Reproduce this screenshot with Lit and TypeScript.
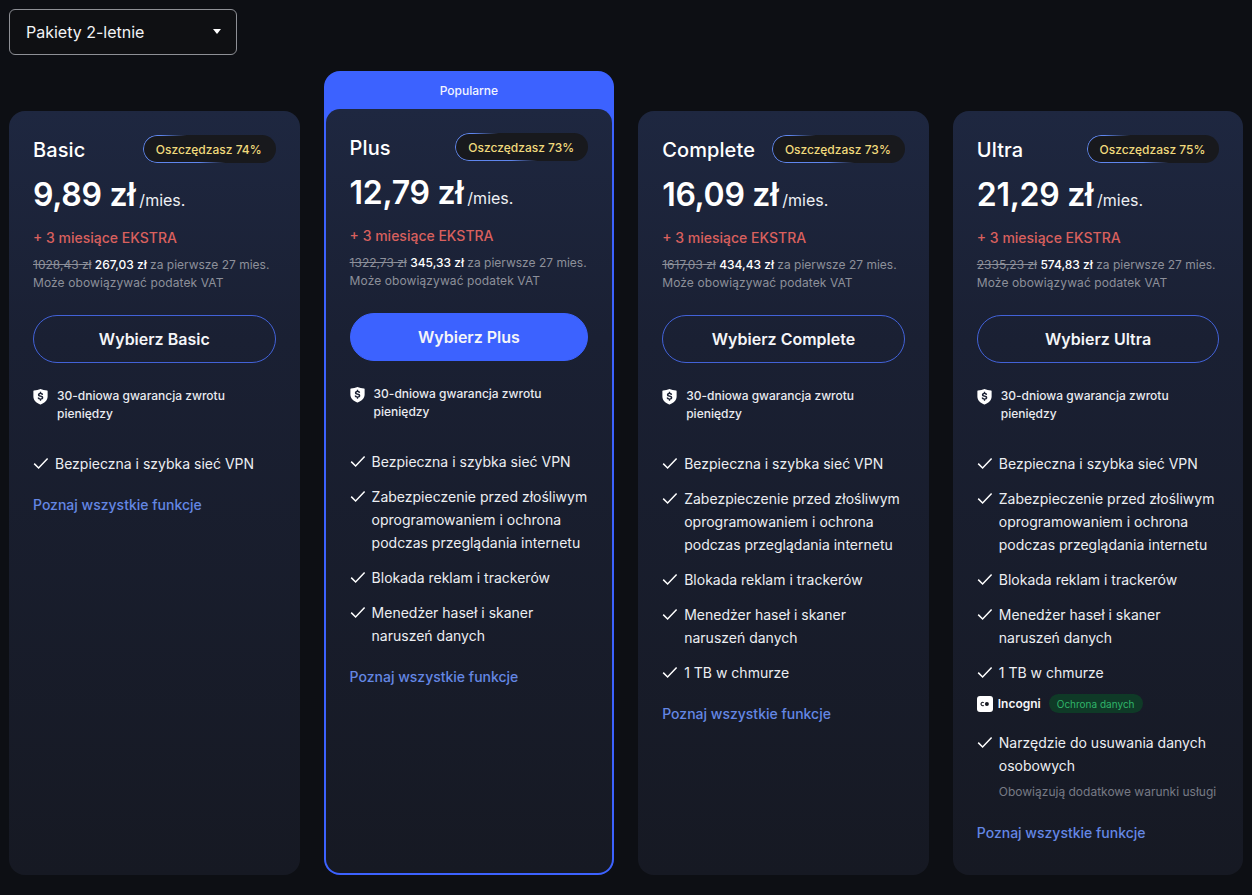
import { LitElement, html, css } from "lit";
import { customElement } from "lit/decorators.js";

const check = html`<svg class="check" viewBox="0 0 16 16" width="16" height="16" fill="none"><path d="M1.2 8.6 5.6 13 14.6 3.6" stroke="#fff" stroke-width="1.5"/></svg>`;
const shield = html`<svg class="shield" viewBox="0 0 16 18" width="15" height="17"><path fill="#fff" fill-rule="evenodd" d="M8 1C10 2 12.6 2.500 15 2.600c.4 0 .6.300.6.600V9c0 3.800-3 6.900-7.400 8.400-.2.100-.3.100-.5 0C3.300 15.900.4 12.800.4 9V3.200c0-.3.2-.6.600-.6C3.400 2.500 6 2 8 1Z"/><path fill="#1a2033" d="M7.300 3.900h1.400v1.200c1.100.2 1.900.8 2.100 1.900L9.300 7.300c-.1-.5-.6-.9-1.300-.9s-1.100.3-1.100.7c0 .5.500.6 1.300.8 1.500.3 2.800.7 2.800 2.300 0 1.100-.9 1.900-2.300 2.100v1.200H7.300v-1.200c-1.300-.2-2.200-.9-2.400-2.100l1.500-.3c.1.700.7 1.100 1.600 1.100.8 0 1.300-.3 1.300-.8s-.6-.7-1.500-.9c-1.400-.3-2.600-.7-2.600-2.200 0-1.100.9-1.900 2.100-2.100Z"/></svg>`;
const incogni = html`<svg class="inc" viewBox="0 0 16 16" width="16" height="16"><rect width="16" height="16" rx="3" fill="#fff"/><path d="M6.800 6.700A1.700 1.700 0 1 0 6.800 9.300" fill="none" stroke="#14171f" stroke-width="1.100"/><circle cx="9.900" cy="8" r="2" fill="#14171f"/></svg>`;

interface Plan {
  name: string; save: string; price: string; old: string; now: string; popular?: boolean; features: number;
}
const plans: Plan[] = [
  { name: "Basic", save: "74", price: "9,89", old: "1028,43", now: "267,03", features: 1 },
  { name: "Plus", save: "73", price: "12,79", old: "1322,73", now: "345,33", popular: true, features: 4 },
  { name: "Complete", save: "73", price: "16,09", old: "1617,03", now: "434,43", features: 5 },
  { name: "Ultra", save: "75", price: "21,29", old: "2335,23", now: "574,83", features: 6 },
];
const feats = [
  "Bezpieczna i szybka sieć VPN",
  "Zabezpieczenie przed złośliwym oprogramowaniem i ochrona podczas przeglądania internetu",
  "Blokada reklam i trackerów",
  "Menedżer haseł i skaner naruszeń danych",
  "1 TB w chmurze",
];

@customElement("app-root")
export class AppRoot extends LitElement {
  static styles = css`
    :host { display: block; min-height: 895px; background: #0d0f14; color: #fff; font-family: Inter, "Liberation Sans", sans-serif; box-sizing: border-box; padding: 9px 8.600px 20px 9px; }
    * { box-sizing: border-box; }
    .select { width: 228px; height: 46px; border: 1px solid #8e9096; border-radius: 6px; background: #0f1013; display: flex; align-items: center; justify-content: space-between; padding: 0 15px 0 16px; font-size: 16px; color: #f2f3f5; }
    .caret { width: 0; height: 0; border-left: 4.500px solid transparent; border-right: 4.500px solid transparent; border-top: 5px solid #fff; margin-top: -2px; }
    .grid { display: grid; grid-template-columns: repeat(4, minmax(0, 1fr)); grid-template-rows: 804px; column-gap: 24px; margin-top: 16px; }
    .col { padding-top: 40px; display: flex; min-width: 0; }
    .col.pop { padding-top: 0; }
    .card { flex: 1; min-width: 0; border-radius: 16px; padding: 24px 24px 24px; background: linear-gradient(180deg, #1e2740 0%, #1a2033 30%, #161923 100%); }
    .pop-wrap { flex: 1; min-width: 0; display: flex; flex-direction: column; background: #3c62ff; border-radius: 16px; padding: 0 2px 2px; }
    .pop-label { height: 38px; flex: none; display: flex; align-items: center; justify-content: center; font-size: 12px; font-weight: 500; color: #f2f4ff; }
    .pop-wrap .card { border-radius: 14px; }
    .head { display: flex; justify-content: space-between; align-items: center; height: 28px; }
    .name { font-size: 20px; font-weight: 500; letter-spacing: .1px; padding-top: 2px; }
    .badge { position: relative; height: 28px; display: flex; align-items: center; padding: 0 14px 0 13px; font-size: 12px; font-weight: 450; color: #f0d97c; background: #18191d; border-radius: 14px; }
    .badge::before { content: ""; position: absolute; inset: 0; padding: 1px; border-radius: 14px; background: linear-gradient(35deg, #5f86ee 33%, transparent 48%); -webkit-mask: linear-gradient(#000 0 0) content-box, linear-gradient(#000 0 0); -webkit-mask-composite: xor; mask-composite: exclude; }
    .price { margin-top: 12px; display: flex; align-items: baseline; height: 40px; line-height: 40px; }
    .amt { font-size: 32px; font-weight: 600; letter-spacing: -.3px; }
    .per { font-size: 16px; margin-left: 4px; color: #eef0f4; }
    .extra { margin-top: 12px; font-size: 14px; line-height: 21px; font-weight: 450; color: #d9605e; }
    .sm { margin-top: 8px; font-size: 12px; line-height: 18px; color: #8d909a; }
    .sm b { color: #fff; font-weight: 450; }
    .vat { letter-spacing: .1px; }
    .btn { margin-top: 23px; height: 48px; border-radius: 24px; border: 1px solid #4262d8; display: flex; align-items: center; justify-content: center; font-size: 16px; font-weight: 600; color: #f4f5f8; }
    .btn.solid { background: #3c62ff; border-color: #3c62ff; }
    .guar { margin-top: 24px; display: flex; gap: 9px; font-size: 12px; line-height: 18px; font-weight: 450; color: #e9ebf0; height: 36px; }
    .shield { flex: none; margin-top: 1px; }
    .feats { margin: 29px 0 0; padding: 0; list-style: none; display: flex; flex-direction: column; gap: 12px; }
    .feats li { display: flex; gap: 6px; font-size: 14px; line-height: 23px; color: #eceef2; }
    .check { flex: none; margin-top: 3px; }
    .feats li.inc-row { align-items: center; gap: 5px; height: 20px; margin: -2.500px 0 5px; font-size: 12px; line-height: 20px; font-weight: 600; color: #f4f5f8; }
    .tag { margin-left: 3px; height: 19px; padding: 0 8px; border-radius: 10px; background: #0f3a27; color: #2fb56a; font-size: 10px; font-weight: 400; display: flex; align-items: center; }
    .note { margin: 6px 0 2px; display: block; font-size: 12px; line-height: 18px; color: #777a85; }
    .fbody { display: block; }
    .link { display: block; margin-top: 20px; font-size: 14px; line-height: 20px; font-weight: 450; color: #6487e4; }
  `;

  private card(p: Plan) {
    const ultra = p.name === "Ultra";
    return html`<div class="card">
      <div class="head"><span class="name">${p.name}</span><span class="badge">Oszczędzasz ${p.save}%</span></div>
      <div class="price"><span class="amt">${p.price} zł</span><span class="per">/mies.</span></div>
      <div class="extra">+ 3 miesiące EKSTRA</div>
      <div class="sm"><s>${p.old} zł</s> <b>${p.now} zł</b> za pierwsze 27 mies.<br /><span class="vat">Może obowiązywać podatek VAT</span></div>
      <div class="btn ${p.popular ? "solid" : ""}">Wybierz ${p.name}</div>
      <div class="guar">${shield}<span>30-dniowa gwarancja zwrotu pieniędzy</span></div>
      <ul class="feats">
        ${feats.slice(0, p.features).map((f) => html`<li>${check}<span>${f}</span></li>`)}
        ${ultra
          ? html`<li class="inc-row">${incogni}<span>Incogni</span><span class="tag">Ochrona danych</span></li>
              <li>${check}<span class="fbody">Narzędzie do usuwania danych osobowych<span class="note">Obowiązują dodatkowe warunki usługi</span></span></li>`
          : ""}
      </ul>
      <a class="link">Poznaj wszystkie funkcje</a>
    </div>`;
  }

  render() {
    return html`
      <div class="select"><span>Pakiety 2-letnie</span><span class="caret"></span></div>
      <div class="grid">
        ${plans.map((p) =>
          p.popular
            ? html`<div class="col pop"><div class="pop-wrap"><div class="pop-label">Popularne</div>${this.card(p)}</div></div>`
            : html`<div class="col">${this.card(p)}</div>`
        )}
      </div>`;
  }
}
